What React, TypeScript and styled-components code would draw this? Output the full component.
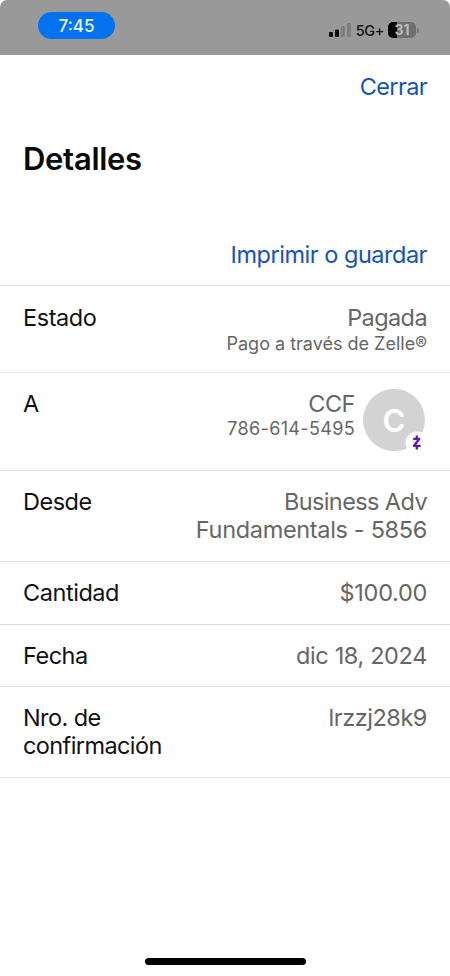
import React from "react";
import styled, { createGlobalStyle } from "styled-components";

const Global = createGlobalStyle`
  * { box-sizing: border-box; }
  body { margin: 0; background: #fff; font-family: Inter, "Liberation Sans", sans-serif; }
`;

const Screen = styled.div`
  width: 450px;
  height: 976px;
  display: flex;
  flex-direction: column;
  background: #fff;
  overflow: hidden;
`;

const StatusBar = styled.header`
  height: 55px;
  flex: none;
  display: flex;
  justify-content: space-between;
  padding: 12px 31px 0 38px;
  background: #999;
  border-radius: 7px 7px 0 0;
`;

const TimePill = styled.div`
  width: 77px;
  height: 27px;
  border-radius: 14px;
  background: #0472ee;
  color: #e8f6ff;
  font-size: 17px;
  font-weight: 500;
  line-height: 28px;
  text-align: center;
`;

const Indicators = styled.div`
  display: flex;
  align-items: center;
  height: 36px;
`;

const Network = styled.span`
  margin: 0 4px 0 5px;
  color: #111;
  font-size: 14.5px;
  font-weight: 500;
  letter-spacing: -0.4px;
`;

const Battery = styled.div`
  width: 28px;
  height: 16px;
  border-radius: 5px;
  background: linear-gradient(to right, #050505 9px, #6f6f6f 9px);
  color: #b9b9b9;
  font-size: 14px;
  font-weight: 700;
  line-height: 16px;
  text-align: center;
`;

const BatteryTip = styled.div`
  width: 2px;
  height: 5px;
  margin-left: 1px;
  border-radius: 0 2px 2px 0;
  background: #777;
`;

const TopActions = styled.div`
  display: flex;
  justify-content: flex-end;
  padding: 18px 23px 0;
`;

const LinkButton = styled.button<{ $tracking: number }>`
  border: 0;
  padding: 0;
  background: none;
  color: #1553b6;
  font: 400 23.5px/28px Inter, "Liberation Sans", sans-serif;
  letter-spacing: ${(p) => p.$tracking}px;
`;

const Title = styled.h1`
  margin: 39px 23px 0;
  color: #0a0a0a;
  font-size: 31px;
  font-weight: 600;
  line-height: 38px;
  letter-spacing: -0.3px;
`;

const SaveActions = styled.div`
  display: flex;
  justify-content: flex-end;
  padding: 63px 23px 16px;
  border-bottom: 1px solid #e8e8e8;
`;

const Row = styled.div<{ $height: number; $top?: number; $line?: string }>`
  display: flex;
  justify-content: space-between;
  height: ${(p) => p.$height}px;
  padding: ${(p) => p.$top ?? 17}px 23px 0;
  border-bottom: 1px solid ${(p) => p.$line ?? "#dcdcdc"};
`;

const Label = styled.div<{ $tracking?: number }>`
  width: 150px;
  color: #111;
  font-size: 23.5px;
  line-height: 28px;
  letter-spacing: ${(p) => p.$tracking ?? -0.5}px;
`;

const Line = styled.div<{ $tracking?: number }>`
  font-size: 23.5px;
  line-height: 28px;
  letter-spacing: ${(p) => p.$tracking ?? -0.5}px;
`;

const Value = styled.div`
  color: #666;
  text-align: right;
  white-space: nowrap;
`;

const Note = styled.div<{ $tracking?: number; $gap?: number }>`
  margin-top: ${(p) => p.$gap ?? 0}px;
  font-size: 18px;
  line-height: 22px;
  letter-spacing: ${(p) => p.$tracking ?? 0}px;
`;

const Recipient = styled.div`
  display: flex;
  gap: 8px;
`;

const Avatar = styled.div`
  position: relative;
  width: 62px;
  height: 62px;
  margin: -1px 2px 0 0;
  border-radius: 50%;
  background: #d3d3d3;
  color: #fff;
  font-size: 31px;
  font-weight: 600;
  line-height: 63px;
  text-align: center;
`;

const Badge = styled.svg`
  position: absolute;
  left: 42px;
  top: 42px;
`;

const HomeIndicator = styled.div`
  width: 161px;
  height: 7px;
  margin: auto auto 11px;
  border-radius: 4px;
  background: #000;
`;

export default function App() {
  return (
    <>
      <Global />
      <Screen>
        <StatusBar>
          <TimePill>7:45</TimePill>
          <Indicators>
            <svg width="22" height="16" viewBox="0 0 22 16">
              <rect x="0" y="10" width="4" height="5" rx="1" fill="#090909" />
              <rect x="6" y="7.5" width="4" height="7.5" rx="1" fill="#090909" />
              <rect x="12" y="4" width="3.8" height="11" rx="1" fill="#7e7e7e" />
              <rect x="18" y="1" width="3.8" height="14" rx="1" fill="#7e7e7e" />
            </svg>
            <Network>5G+</Network>
            <Battery>31</Battery>
            <BatteryTip />
          </Indicators>
        </StatusBar>
        <TopActions>
          <LinkButton $tracking={-0.6}>Cerrar</LinkButton>
        </TopActions>
        <Title>Detalles</Title>
        <SaveActions>
          <LinkButton $tracking={-0.48}>Imprimir o guardar</LinkButton>
        </SaveActions>
        <Row $height={87} $top={18} $line="#ebebeb">
          <Label $tracking={-0.45}>Estado</Label>
          <Value>
            <Line $tracking={-0.6}>Pagada</Line>
            <Note $gap={1}>Pago a través de Zelle®</Note>
          </Value>
        </Row>
        <Row $height={98}>
          <Label>A</Label>
          <Recipient>
            <Value>
              <Line>CCF</Line>
              <Note $tracking={0.35}>786-614-5495</Note>
            </Value>
            <Avatar>
              C
              <Badge width="24" height="24" viewBox="0 0 24 24">
                <circle cx="12" cy="12" r="11.5" fill="#fff" />
                <path
                  d="M8.2 7.8H14.4L9 14.8H15.6M11.8 4.5V8M11.8 14.8V18.5"
                  fill="none"
                  stroke="#5a1cb4"
                  strokeWidth="2.3"
                  strokeLinejoin="round"
                />
              </Badge>
            </Avatar>
          </Recipient>
        </Row>
        <Row $height={91}>
          <Label>Desde</Label>
          <Value>
            <Line $tracking={-0.6}>Business Adv</Line>
            <Line $tracking={-0.33}>Fundamentals - 5856</Line>
          </Value>
        </Row>
        <Row $height={63}>
          <Label $tracking={-0.45}>Cantidad</Label>
          <Value>
            <Line $tracking={-0.3}>$100.00</Line>
          </Value>
        </Row>
        <Row $height={62}>
          <Label>Fecha</Label>
          <Value>
            <Line $tracking={-0.36}>dic 18, 2024</Line>
          </Value>
        </Row>
        <Row $height={91} $line="#e8e8e8">
          <Label $tracking={-0.6}>Nro. de confirmación</Label>
          <Value>
            <Line $tracking={-0.45}>lrzzj28k9</Line>
          </Value>
        </Row>
        <HomeIndicator />
      </Screen>
    </>
  );
}
